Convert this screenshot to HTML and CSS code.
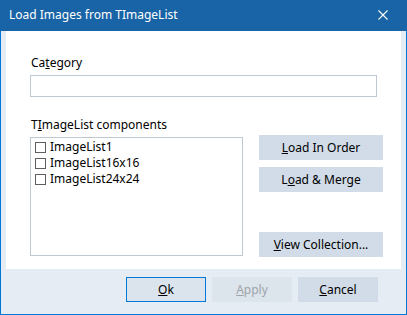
FILE: index.html
```html
<!DOCTYPE html>
<html lang="en">
<head>
  <meta charset="UTF-8" />
  <title>Load Images from TImageList</title>
  <link rel="stylesheet" href="styles.css">
</head>
<body>
  <div class="window">
    <div class="titlebar">
      <span class="title">Load Images from TImageList</span>
      <span class="close">
        <svg width="10" height="10" viewBox="0 0 10 10">
          <path d="M0.5 0.5 L9.5 9.5 M9.5 0.5 L0.5 9.5" stroke="#fff" stroke-width="1.1" fill="none"/>
        </svg>
      </span>
    </div>

    <div class="panel">
      <div class="label">Ca<u>t</u>egory</div>
      <input class="edit" type="text" />

      <div class="label list-label">T<u>I</u>mageList components</div>
      <div class="list-row">
        <div class="listbox">
          <label class="item"><span class="check"></span>ImageList1</label>
          <label class="item"><span class="check"></span>ImageList16x16</label>
          <label class="item"><span class="check"></span>ImageList24x24</label>
        </div>
        <div class="side-buttons">
          <button class="btn"><u>L</u>oad In Order</button>
          <button class="btn">L<u>o</u>ad &amp; Merge</button>
          <button class="btn bottom"><u>V</u>iew Collection...</button>
        </div>
      </div>
    </div>

    <div class="footer">
      <button class="btn foot default"><u>O</u>k</button>
      <button class="btn foot disabled"><u>A</u>pply</button>
      <button class="btn foot"><u>C</u>ancel</button>
    </div>
  </div>
</body>
</html>
```

FILE: styles.css
```css
* {
  margin: 0;
  padding: 0;
  box-sizing: border-box;
  font-family: 'Noto Sans', 'Open Sans', sans-serif;
}

body {
  background: #fff;
  color: #000;
  font-size: 12px;
}

.window {
  width: 407px;
  height: 315px;
  border: 1px solid #0078d7;
  border-top: 0;
  background: #e6ecf3;
  display: flex;
  flex-direction: column;
}

.titlebar {
  height: 31px;
  margin: 0 -1px;
  padding-left: 9px;
  background: #1864a6;
  color: #fff;
  display: flex;
  align-items: center;
  justify-content: space-between;
}

.title {
  font-size: 12px;
  line-height: 16px;
  padding-bottom: 1px;
}

.close {
  width: 46px;
  height: 31px;
  display: flex;
  align-items: center;
  justify-content: center;
  padding-bottom: 2px;
  margin-right: 1px;
}

.close svg {
  display: block;
}

.panel {
  margin: 0 5px;
  height: 238px;
  background: #fff;
  padding: 24px 18px 0 24px;
}

.label {
  line-height: 16px;
  height: 16px;
  margin-bottom: 4px;
  padding-left: 1px;
}

.list-label {
  margin-top: 20px;
  margin-bottom: 2px;
}

.edit {
  display: block;
  width: 347px;
  height: 22px;
  border: 1px solid #bdc8d2;
  outline: none;
  background: #fff;
}

.list-row {
  display: flex;
  gap: 16px;
  align-items: flex-start;
}

.listbox {
  width: 213px;
  height: 119px;
  margin-top: 2px;
  border: 1px solid #bdc8d2;
  padding: 1px 0 0 4px;
  display: flex;
  flex-direction: column;
}

.item {
  height: 16px;
  line-height: 16px;
  display: flex;
  align-items: center;
  gap: 4px;
}

.check {
  width: 11px;
  height: 11px;
  border: 1px solid #5f5f5f;
  background: #fff;
}

.side-buttons {
  width: 124px;
  height: 122px;
  display: flex;
  flex-direction: column;
  gap: 7px;
}

.btn {
  height: 25px;
  width: 124px;
  border: 1px solid #d1dce8;
  background: #d1dce8;
  color: #000;
  font-size: 12px;
  line-height: 16px;
  cursor: pointer;
}

.btn.bottom {
  margin-top: auto;
}

.footer {
  flex: 1;
  display: flex;
  justify-content: flex-end;
  gap: 6px;
  padding: 8px 28px 0 0;
}

.btn.foot {
  width: 80px;
}

.btn.default {
  border-color: #0078d7;
  background: #dbe3ec;
}

.btn.disabled {
  border-color: #dce4ec;
  background: #dce4ec;
  color: #a0a5aa;
}
```
